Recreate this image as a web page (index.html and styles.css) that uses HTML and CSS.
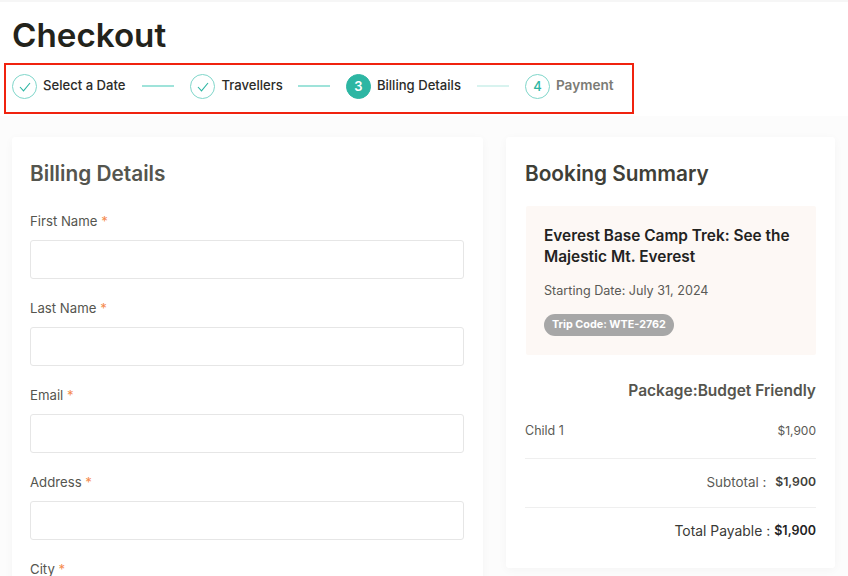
FILE: index.html
```html
<!DOCTYPE html>
<html lang="en">
<head>
<meta charset="utf-8">
<title>Checkout</title>
<link rel="stylesheet" href="styles.css">
</head>
<body>
<div class="page">
  <h1 class="title">Checkout</h1>
  <div class="stepper">
    <div class="step done">
      <span class="dot"><svg viewBox="0 0 12 10" width="12" height="10"><path d="M1 5l3.5 3.8L11 1" fill="none" stroke="#2db6a3" stroke-width="1.1"/></svg></span>
      <span class="step-name">Select a Date</span>
    </div>
    <span class="line first"></span>
    <div class="step done">
      <span class="dot"><svg viewBox="0 0 12 10" width="12" height="10"><path d="M1 5l3.5 3.8L11 1" fill="none" stroke="#2db6a3" stroke-width="1.1"/></svg></span>
      <span class="step-name">Travellers</span>
    </div>
    <span class="line second"></span>
    <div class="step current">
      <span class="dot">3</span>
      <span class="step-name">Billing Details</span>
    </div>
    <span class="line faint"></span>
    <div class="step upcoming">
      <span class="dot">4</span>
      <span class="step-name">Payment</span>
    </div>
  </div>
  <div class="columns">
    <section class="card billing">
      <h2 class="card-title muted">Billing Details</h2>
      <div class="field"><label>First Name <span class="req">*</span></label><div class="input"></div></div>
      <div class="field"><label>Last Name <span class="req">*</span></label><div class="input"></div></div>
      <div class="field"><label>Email <span class="req">*</span></label><div class="input"></div></div>
      <div class="field"><label>Address <span class="req">*</span></label><div class="input"></div></div>
      <div class="field"><label>City <span class="req">*</span></label><div class="input"></div></div>
    </section>
    <aside class="card summary">
      <h2 class="card-title">Booking Summary</h2>
      <div class="trip">
        <h3 class="trip-name">Everest Base Camp Trek: See the Majestic Mt. Everest</h3>
        <p class="trip-date">Starting Date: July 31, 2024</p>
        <span class="trip-code">Trip Code: WTE-2762</span>
      </div>
      <h4 class="package">Package:Budget Friendly</h4>
      <div class="row child"><span>Child 1</span><span>$1,900</span></div>
      <div class="row subtotal"><span>Subtotal :</span><b>$1,900</b></div>
      <div class="row total"><span>Total Payable :</span><b>$1,900</b></div>
    </aside>
  </div>
</div>
</body>
</html>
```
FILE: styles.css
```css
* { box-sizing: border-box; }
html, body { margin: 0; height: 576px; overflow: hidden; background: #fff; }
body { font-family: Inter, "Open Sans", sans-serif; color: #4f4f4a; }
.page { height: 576px; overflow: hidden; border-top: 2px solid #f6f6f6; padding: 0 12px; background: linear-gradient(#fff 114px, #fcfcfc 114px); }
.title { margin: 14px 0 0; height: 39px; font-size: 33.2px; line-height: 39px; font-weight: 600; color: #23231b; }
.stepper { display: flex; align-items: flex-start; width: 630px; height: 51px; margin: 8px 0 0 -8px; padding: 9px 0 0 6px; border: 2px solid #f0230f; background: #fff; }
.step { display: flex; align-items: flex-start; gap: 6px; font-size: 13.1px; font-weight: 500; line-height: 22px; color: #2b2b28; }
.dot { display: flex; align-items: center; justify-content: center; width: 25px; height: 25px; border: 1px solid #7fd6ca; border-radius: 50%; font-size: 13px; line-height: 1; color: #2db6a3; }
.current .dot { background: #2db6a3; border-color: #2db6a3; color: #fff; font-weight: 600; }
.upcoming .step-name { color: #7b7b75; font-weight: 600; font-size: 13.6px; }
.line { width: 32px; height: 2px; margin: 11px 16px 0; background: #9fe3da; }
.first { margin-left: 17px; }
.second { margin-left: 15px; }
.faint { background: #d8f3ef; }
.columns { display: flex; align-items: flex-start; gap: 23px; margin-top: 23px; }
.card { background: #fff; border-radius: 3px; box-shadow: 0 2px 10px rgba(0,0,0,.035); }
.billing { width: 471px; height: 500px; padding: 24px 19px 0 18px; }
.summary { width: 329px; height: 431px; padding: 24px 19px 0 19px; }
.card-title { margin: 0; font-size: 20.8px; line-height: 26px; font-weight: 600; color: #3f3f38; }
.muted { color: #55554e; }
.billing .card-title + .field { margin-top: 25px; }
.field + .field { margin-top: 20px; }
label { display: block; height: 18px; font-size: 13.2px; line-height: 18px; color: #55554f; }
.req { color: #f58a4b; }
.input { height: 39px; margin-top: 10px; border: 1px solid #e6e6e6; border-radius: 3px; background: #fff; }
.trip { height: 149px; margin: 19px 0 0 1px; padding: 19px 18px 0 18px; background: #fdf8f5; border-radius: 2px; }
.trip-name { margin: 0; font-size: 15.4px; line-height: 21px; font-weight: 600; color: #23231f; }
.trip-date { margin: 15px 0 0; font-size: 12.6px; line-height: 18px; color: #5a5a55; }
.trip-code { display: inline-block; height: 22px; margin-top: 14px; padding: 0 8px; border-radius: 11px; background: #a7a7a7; color: #fff; font-size: 10.8px; line-height: 22px; font-weight: 700; }
.package { margin: 26px 0 0; font-size: 15.5px; line-height: 20px; font-weight: 600; text-align: right; color: #55554e; }
.row { display: flex; font-size: 12.5px; line-height: 18px; color: #5a5a55; }
.row b { font-size: 12.2px; font-weight: 600; color: #3f3f3a; }
.child { justify-content: space-between; margin-top: 21px; padding-bottom: 18px; border-bottom: 1px solid #efefef; }
.child span:last-child { font-size: 12px; }
.subtotal { justify-content: flex-end; gap: 9px; padding: 14px 0 16px; border-bottom: 1px solid #efefef; font-size: 13.4px; }
.total { justify-content: flex-end; gap: 4px; padding-top: 14px; color: #3a3a36; font-size: 13.9px; }
.total b { color: #23231f; font-size: 12.5px; }
```
